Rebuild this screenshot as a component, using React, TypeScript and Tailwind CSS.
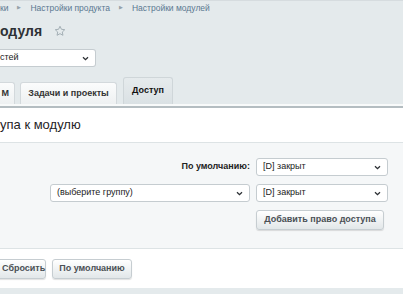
import React from "react";

function Chevron() {
  return (
    <svg width="7" height="5" viewBox="0 0 7 5" className="shrink-0">
      <path d="M1 1.2l2.5 2.5 2.5-2.5" stroke="#2b2f33" strokeWidth="1.3" fill="none" />
    </svg>
  );
}

function Select({ text, className }: { text: string; className: string }) {
  return (
    <div
      className={`flex h-[18px] items-center rounded-[3px] border border-[#c5ccd0] bg-white pr-[6px] text-[9px] text-[#222] ${className}`}
    >
      <span className="flex-1 text-left">{text}</span>
      <Chevron />
    </div>
  );
}

function Button({ label, className = "" }: { label: string; className?: string }) {
  return (
    <div
      className={`flex h-[20px] items-center rounded-[3px] border border-[#c6cdd1] bg-linear-to-b from-white to-[#e2e7e9] text-[9px] font-bold text-[#4a5055] shadow-[0_1px_1px_rgba(0,0,0,0.12)] ${className}`}
    >
      {label}
    </div>
  );
}

function Crumb() {
  return <span className="mx-[9px] text-[5px] text-[#95a1a8]">▶</span>;
}

export default function App() {
  return (
    <div className="h-[294px] w-[403px] overflow-hidden bg-[#e4eaec] font-['Liberation_Sans',Arial,sans-serif]">
      <div className="h-px bg-[#d6dcdf]" />

      <div className="mt-[1px] flex h-[12px] items-center text-[8.5px] text-[#5a7891]">
        <span>ки</span>
        <Crumb />
        <span>Настройки продукта</span>
        <Crumb />
        <span>Настройки модулей</span>
      </div>

      <div className="mt-[7px] flex h-[20px] items-center">
        <span className="text-[14px] font-bold leading-[20px] text-[#2d3135]">одуля</span>
        <svg width="12" height="12" viewBox="0 0 24 24" className="ml-[12px]">
          <path
            d="M12 2.5l2.9 6.1 6.6.8-4.9 4.6 1.3 6.6L12 17.3l-5.9 3.3 1.3-6.6-4.9-4.6 6.6-.8z"
            fill="none"
            stroke="#a3afb5"
            strokeWidth="2"
            strokeLinejoin="round"
          />
        </svg>
      </div>

      <Select text="стей" className="mt-[8px] w-[96px] rounded-l-none border-l-0" />

      <div className="mt-[10px] flex h-[27px] items-end gap-[5px]">
        <div className="flex h-[22px] w-[15px] items-center justify-end rounded-tr-[3px] border border-b-0 border-l-0 border-[#d3d9dc] bg-linear-to-b from-[#fbfcfc] to-[#eef1f2] pr-[5px] text-[9px] font-bold text-[#333]">
          М
        </div>
        <div className="flex h-[22px] w-[97px] items-center justify-center rounded-t-[3px] border border-b-0 border-[#d3d9dc] bg-linear-to-b from-[#fbfcfc] to-[#eef1f2] text-[9px] font-bold text-[#333]">
          Задачи и проекты
        </div>
        <div className="ml-[1px] flex h-[27px] w-[50px] items-center justify-center rounded-t-[3px] border border-b-0 border-[#cfd6d9] bg-linear-to-b from-[#e6ebed] to-[#dae1e4] text-[9px] font-bold text-[#111]">
          Доступ
        </div>
      </div>

      <div className="h-[2px] bg-[#f8fafa]" />

      <div className="border-t-2 border-[#b4bdc1] bg-white">
        <div className="flex h-[34px] items-center text-[13px] text-[#1f2326]">упа к модулю</div>

        <div className="flex flex-col items-end gap-[8px] border-y border-[#dde3e5] bg-[#f5f7f8] pb-[18px] pr-[15px] pt-[15px]">
          <div className="flex items-center gap-[6px]">
            <span className="text-[9px] font-bold text-[#222]">По умолчанию:</span>
            <Select text="[D] закрыт" className="w-[132px] pl-[6px]" />
          </div>
          <div className="flex items-center gap-[6px]">
            <Select text="(выберите группу)" className="w-[200px] pl-[6px]" />
            <Select text="[D] закрыт" className="w-[132px] pl-[6px]" />
          </div>
          <div className="w-[132px]">
            <Button label="Добавить право доступа" className="w-[128px] justify-center" />
          </div>
        </div>

        <div className="flex h-[39px] gap-[6px] pt-[10px]">
          <Button label="Сбросить" className="-ml-[8px] w-[54px] pl-[9px]" />
          <Button label="По умолчанию" className="w-[80px] justify-center" />
        </div>
      </div>
    </div>
  );
}
